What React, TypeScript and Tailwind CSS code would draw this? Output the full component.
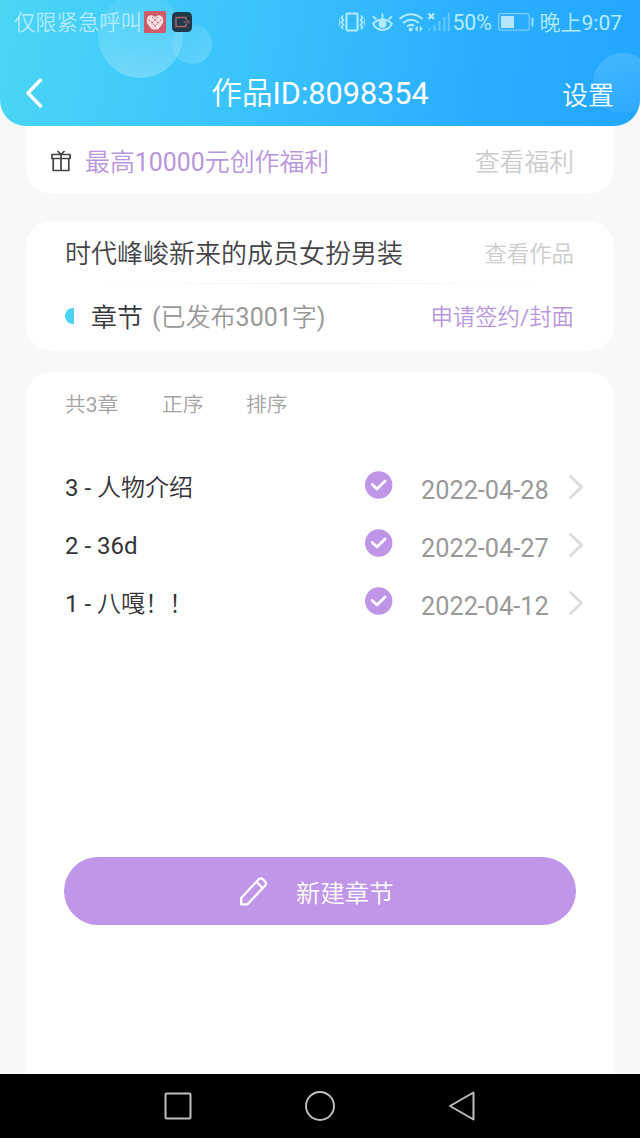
import React from "react";

const chapters = [
  { title: "3 - 人物介绍", date: "2022-04-28" },
  { title: "2 - 36d", date: "2022-04-27" },
  { title: "1 - 八嘎！！", date: "2022-04-12" },
];

/* Chinese glyphs use the DemiLight cut while Latin letters and digits stay regular. */
function Mixed({ children }: { children: string }) {
  return (
    <>
      {children.split(/([\x20-\x7e]+)/).map((part, i) =>
        i % 2 ? (
          <span key={i} className="whitespace-pre font-normal">{part}</span>
        ) : (
          part
        ),
      )}
    </>
  );
}

function StatusBar() {
  return (
    <div className="flex h-11 items-center pl-[14px] pr-[18px] text-[21.3px] text-[#b4ebff]">
      <span className="pt-[2px]">仅限紧急呼叫</span>
      <svg className="ml-[2px]" width="22" height="22" viewBox="0 0 22 22">
        <rect width="22" height="22" rx="1.5" fill="#d05a68" />
        <path d="M8 18.500 L3.500 13 Q1.500 8 4.500 5 Q8 3 11 6 Q14 3 17.500 5 Q20.500 8 18.500 13 L14 18.500 Z" fill="#f3dfe6" />
        <path d="M4.500 8.500 L12 16 M8 6 L15 13 M17.500 8.500 L10 16 M14 6 L7 13" stroke="#d05a68" strokeWidth="1" strokeDasharray="2 1.300" />
      </svg>
      <svg className="ml-[6px]" width="20" height="20" viewBox="0 0 20 20">
        <rect width="20" height="20" rx="4.5" fill="#1f3a49" />
        <path d="M14 8 V5.500 H4 V14.500 H14 V12" fill="none" stroke="#a8656a" strokeWidth="1.4" />
        <path d="M11.500 10 H14 M15 8 V12 M17 8.500 V11.500" stroke="#a8656a" strokeWidth="1" />
      </svg>
      <div className="flex-1" />
      <svg className="mr-[2px] shrink-0" width="112" height="24" viewBox="0 0 112 24" fill="none" stroke="currentColor" strokeWidth="1.8">
        <rect x="7.500" y="3.500" width="11" height="17" rx="1" strokeWidth="2" />
        <path d="M4 5.500 L2.500 7.500 L4.500 10 L2.500 12.500 L4.500 15 L2.500 17 L4 19 M22 5.500 L23.500 7.500 L21.500 10 L23.500 12.500 L21.500 15 L23.500 17 L22 19" strokeWidth="1.700" />
        <path d="M0.700 8.500 V16 M25.300 8.500 V16" strokeWidth="0.900" />
        <path d="M34 13.500 Q43.500 5.500 53 13.500 Q50 20 43.500 20 Q37 20 34 13.500 Z" />
        <circle cx="43.500" cy="14" r="3.900" fill="currentColor" stroke="none" />
        <path d="M43.500 9 V3.500 M37.500 9.500 L34 6.500 M49.500 9.500 L53 6.500" />
        <path d="M60.500 9 Q72 -0.500 83.500 9 M64 13 Q72 6.500 80 13 M68 16.500 Q72 13.500 75 16" strokeWidth="2" />
        <circle cx="71.700" cy="19.500" r="1.900" fill="currentColor" stroke="none" />
        <path d="M78.500 16 v5.500 l-2.500 -2.700 Z M81 16 v5.500 l2.500 -2.700 Z" fill="currentColor" strokeWidth="0.400" />
        <path d="M89.500 3.500 l5.500 5.500 M95 3.500 l-5.500 5.500" strokeWidth="2.200" />
        <path d="M90.500 18 v3 M95.500 15 v6 M100.500 11 v10 M105.300 7 v14 M109.700 3 v18" stroke="#65c9ff" strokeWidth="2" />
      </svg>
      <span className="w-[40px] pt-[2px] font-normal tracking-[-0.1px]">50%</span>
      <svg className="ml-[5px] shrink-0" width="36" height="18" viewBox="0 0 36 18" fill="none">
        <rect x="0.700" y="0.700" width="30.500" height="16.500" rx="1.500" stroke="#7fd0ff" strokeWidth="1.200" />
        <rect x="3" y="3" width="13" height="12" fill="#b4e4ff" />
        <path d="M34.500 4.500 V13.500" stroke="#9adfff" strokeWidth="2" />
      </svg>
      <span className="ml-[6px] pt-[2px] text-[21px]"><Mixed>晚上9:07</Mixed></span>
    </div>
  );
}

function Header() {
  return (
    <header className="relative z-10 h-[126px] shrink-0 overflow-hidden rounded-b-[26px] bg-[linear-gradient(100deg,#4ad6f5_0%,#3bc5fb_35%,#2bb0ff_70%,#22a6ff_100%)]">
      <div className="absolute left-[98px] top-[-7px] h-[85px] w-[85px] rounded-full bg-linear-to-b from-white/5 to-white/25" />
      <div className="absolute left-[172px] top-[24px] h-[40px] w-[40px] rounded-full bg-linear-to-br from-white/5 to-white/20" />
      <div className="absolute left-[593px] top-[53px] h-[60px] w-[60px] rounded-full bg-linear-to-b from-white/15 to-white/5" />
      <div className="relative">
        <StatusBar />
        <div className="grid h-[98px] grid-cols-[1fr_auto_1fr] items-center px-[26px] text-white">
          <svg width="18" height="30" viewBox="0 0 18 30" fill="none" stroke="white" strokeWidth="3.400" strokeLinecap="round" strokeLinejoin="round">
            <path d="M14.500 2 L2 15 L14.500 28" />
          </svg>
          <h1 className="pt-[3px] text-[30.600px] font-[350]"><Mixed>作品ID:8098354</Mixed></h1>
          <span className="pt-[5px] text-right text-[26px]">设置</span>
        </div>
      </div>
    </header>
  );
}

function ChapterRow({ title, date }: { title: string; date: string }) {
  return (
    <div className="-mr-2 flex h-[58px] items-center">
      <span className="w-[301px] shrink-0 pl-px pt-[5px] text-[24px] text-[#333338]"><Mixed>{title}</Mixed></span>
      <svg className="shrink-0" width="28" height="28" viewBox="0 0 28 28" fill="none">
        <circle cx="13.700" cy="14" r="13.700" fill="#be95e7" />
        <path d="M7.200 13.500 L12 18 L20 10" stroke="white" strokeWidth="2.800" strokeLinecap="round" strokeLinejoin="round" />
      </svg>
      <span className="ml-[28px] mt-[12px] w-[147px] shrink-0 text-[25.300px] font-normal text-[#999]">{date}</span>
      <svg className="mt-1 shrink-0" width="16" height="26" viewBox="0 0 16 26" fill="none" stroke="#dcdcdc" strokeWidth="3" strokeLinecap="round" strokeLinejoin="round">
        <path d="M2.500 2.500 L13.500 13 L2.500 23.500" />
      </svg>
    </div>
  );
}

export default function App() {
  return (
    <div className="flex h-[1138px] w-[640px] flex-col overflow-hidden bg-[#f8f8f8] font-[Roboto,'Noto_Sans_CJK_SC',sans-serif] leading-none font-[350] whitespace-nowrap">
      <Header />
      <main className="flex flex-1 flex-col px-[26px]">
        <section className="flex h-[68px] items-center justify-between rounded-b-[26px] bg-white pl-[25px] pr-[40px]">
          <div className="flex items-center">
            <svg className="mt-[2px]" width="20" height="22" viewBox="0 0 20 22" fill="none" stroke="#444" strokeWidth="1.700" strokeLinejoin="round">
              <path d="M0.900 4.500 H19.100 V8.500 H0.900 Z M2.200 8.500 V20.500 H17.800 V8.500 M10 4.500 V20.500 M6.500 1 L10 4.500 L13.500 1" />
            </svg>
            <span className="ml-[14px] pt-[6px] text-[24.900px] text-[#b995dc]"><Mixed>最高10000元创作福利</Mixed></span>
          </div>
          <span className="pt-[7px] text-[24.800px] text-[#cccccc]">查看福利</span>
        </section>
        <section className="mt-[27px] flex h-[130px] flex-col rounded-[26px] bg-white pl-[39px] pr-[40px]">
          <div className="flex h-[62px] items-center justify-between pt-[4px]">
            <span className="text-[26px] text-[#444448]">时代峰峻新来的成员女扮男装</span>
            <span className="text-[22.400px] text-[#cccccc]">查看作品</span>
          </div>
          <div className="mx-4 h-px bg-linear-to-r from-transparent via-[#ededed] to-transparent" />
          <div className="flex h-[64px] items-center">
            <div className="h-4 w-[9px] rounded-l-full bg-[#4bd3f2]" />
            <span className="ml-[17px] pt-[3px] text-[26px] text-[#38383c]">章节</span>
            <span className="ml-[9px] pt-[2px] text-[25px] text-[#999]"><Mixed>(已发布3001字)</Mixed></span>
            <span className="ml-auto pt-[2px] text-[22.400px] text-[#b995dc]"><Mixed>申请签约/封面</Mixed></span>
          </div>
        </section>
        <section className="mt-[21px] flex flex-1 flex-col rounded-t-[26px] bg-white px-[38px]">
          <div className="mt-[20px] flex h-6 items-center pl-px pt-[2px] text-[20.800px] text-[#a3a3a3]">
            <span className="w-[97px]"><Mixed>共3章</Mixed></span>
            <span className="w-[84px]">正序</span>
            <span>排序</span>
          </div>
          <div className="mt-[40px]">
            {chapters.map((c) => (
              <ChapterRow key={c.date} title={c.title} date={c.date} />
            ))}
          </div>
          <button className="mt-[227px] flex h-[68px] items-center rounded-full bg-[#bf96e8] pl-[175px] text-[24.400px] text-white">
            <svg width="30" height="30" viewBox="0 0 30 30" fill="none" stroke="white" strokeWidth="2.300" strokeLinejoin="round">
              <path d="M2.200 28.300 V22 L19.500 3.500 Q21.500 1.300 23.800 3.300 L26 5.500 Q28 7.500 26 9.800 L8.500 28.300 Z M17.500 5.800 L23.500 12" />
            </svg>
            <span className="ml-[27px] pt-[7px]">新建章节</span>
          </button>
        </section>
      </main>
      <nav className="h-[64px] shrink-0 bg-black">
        <svg width="640" height="64" viewBox="0 0 640 64" fill="none" stroke="#bdbdbd" strokeWidth="2" strokeLinejoin="round">
          <rect x="165.500" y="19.500" width="25" height="25" rx="1" />
          <circle cx="320" cy="32" r="14" />
          <path d="M450 32 L473.500 18.500 V45.500 Z" />
        </svg>
      </nav>
    </div>
  );
}
